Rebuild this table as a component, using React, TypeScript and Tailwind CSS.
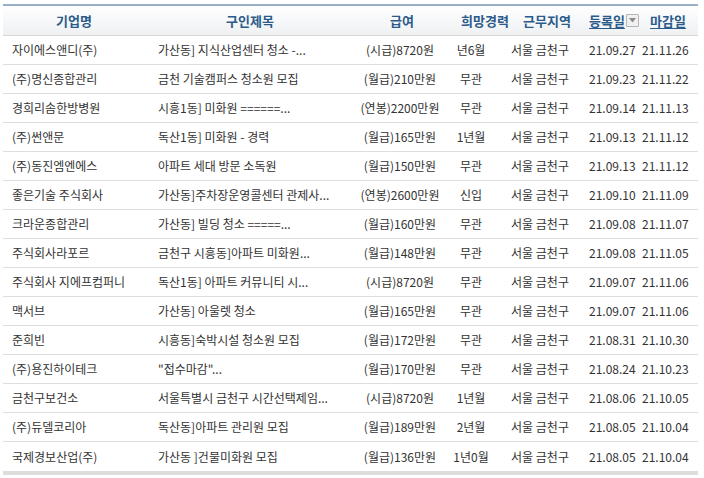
import React from "react";

const rows: string[][] = [
  ["자이에스앤디(주)", "가산동] 지식산업센터 청소 -...", "(시급)8720원", "년6월", "서울 금천구", "21.09.27", "21.11.26"],
  ["(주)명신종합관리", "금천 기술캠퍼스 청소원 모집", "(월급)210만원", "무관", "서울 금천구", "21.09.23", "21.11.22"],
  ["경희리솜한방병원", "시흥1동] 미화원 ======...", "(연봉)2200만원", "무관", "서울 금천구", "21.09.14", "21.11.13"],
  ["(주)썬앤문", "독산1동] 미화원 - 경력", "(월급)165만원", "1년월", "서울 금천구", "21.09.13", "21.11.12"],
  ["(주)동진엠엔에스", "아파트 세대 방문 소독원", "(월급)150만원", "무관", "서울 금천구", "21.09.13", "21.11.12"],
  ["좋은기술 주식회사", "가산동]주차장운영콜센터 관제사...", "(연봉)2600만원", "신입", "서울 금천구", "21.09.10", "21.11.09"],
  ["크라운종합관리", "가산동] 빌딩 청소 =====...", "(월급)160만원", "무관", "서울 금천구", "21.09.08", "21.11.07"],
  ["주식회사라포르", "금천구 시흥동]아파트 미화원...", "(월급)148만원", "무관", "서울 금천구", "21.09.08", "21.11.05"],
  ["주식회사 지에프컴퍼니", "독산1동] 아파트 커뮤니티 시...", "(시급)8720원", "무관", "서울 금천구", "21.09.07", "21.11.06"],
  ["맥서브", "가산동] 아울렛 청소", "(월급)165만원", "무관", "서울 금천구", "21.09.07", "21.11.06"],
  ["준희빈", "시흥동]숙박시설 청소원 모집", "(월급)172만원", "무관", "서울 금천구", "21.08.31", "21.10.30"],
  ["(주)용진하이테크", "\"접수마감\"...", "(월급)170만원", "무관", "서울 금천구", "21.08.24", "21.10.23"],
  ["금천구보건소", "서울특별시 금천구 시간선택제임...", "(시급)8720원", "1년월", "서울 금천구", "21.08.06", "21.10.05"],
  ["(주)듀델코리아", "독산동]아파트 관리원 모집", "(월급)189만원", "2년월", "서울 금천구", "21.08.05", "21.10.04"],
  ["국제경보산업(주)", "가산동 ]건물미화원 모집", "(월급)136만원", "1년0월", "서울 금천구", "21.08.05", "21.10.04"],
];

function SortIcon() {
  return (
    <span className="inline-flex items-center justify-center w-[13px] h-[13px] border border-[#b5b5b5] bg-[#f0f0f0] rounded-[1px] ml-[1px] align-middle">
      <svg width="7" height="5" viewBox="0 0 7 5">
        <polygon points="0,0 7,0 3.5,4.5" fill="#8a8a8a" />
      </svg>
    </span>
  );
}

export default function App() {
  return (
    <div
      className="w-[704px] h-[478px] bg-white pt-[4px] pl-[3px]"
      style={{ fontFamily: '"Noto Sans CJK KR", "Noto Sans", sans-serif' }}
    >
      <div className="w-[695px]">
        {/* header */}
        <div className="flex h-[32px] border-t-2 border-t-[#97afc7] border-b border-b-[#d6d6d6] bg-gradient-to-b from-white to-[#eef0f2] text-[13px] font-bold text-[#2b5b8b] items-center">
          <div className="w-[142px] text-center">기업명</div>
          <div className="w-[210px] text-center">구인제목</div>
          <div className="w-[90px] text-center pl-[4px]">급여</div>
          <div className="w-[52px] text-center pl-[16px] whitespace-nowrap">희망경력</div>
          <div className="w-[86px] text-center pl-[14px] whitespace-nowrap">근무지역</div>
          <div className="w-[57px] pl-[6px] whitespace-nowrap flex items-center">
            <span className="underline underline-offset-2">등록일</span>
            <SortIcon />
          </div>
          <div className="w-[58px] pl-[10px] whitespace-nowrap">
            <span className="underline underline-offset-2">마감일</span>
          </div>
        </div>
        {/* body */}
        {rows.map((r, i) => (
          <div
            key={i}
            className={
              "flex items-center h-[29px] text-[12px] text-[#333333] whitespace-nowrap " +
              (i === rows.length - 1 ? "h-[28px]" : "border-b border-b-[#dedede]")
            }
          >
            <div className="w-[142px] pl-[9px] overflow-hidden">{r[0]}</div>
            <div className="w-[210px] pl-[13px] overflow-hidden">{r[1]}</div>
            <div className="w-[90px] text-center">{r[2]}</div>
            <div className="w-[52px] text-center">{r[3]}</div>
            <div className="w-[86px] text-center">{r[4]}</div>
            <div className="w-[57px] pl-[6px]">{r[5]}</div>
            <div className="w-[58px] pl-[2px]">{r[6]}</div>
          </div>
        ))}
        <div className="h-[4px] bg-[#dddddd]" />
      </div>
    </div>
  );
}
